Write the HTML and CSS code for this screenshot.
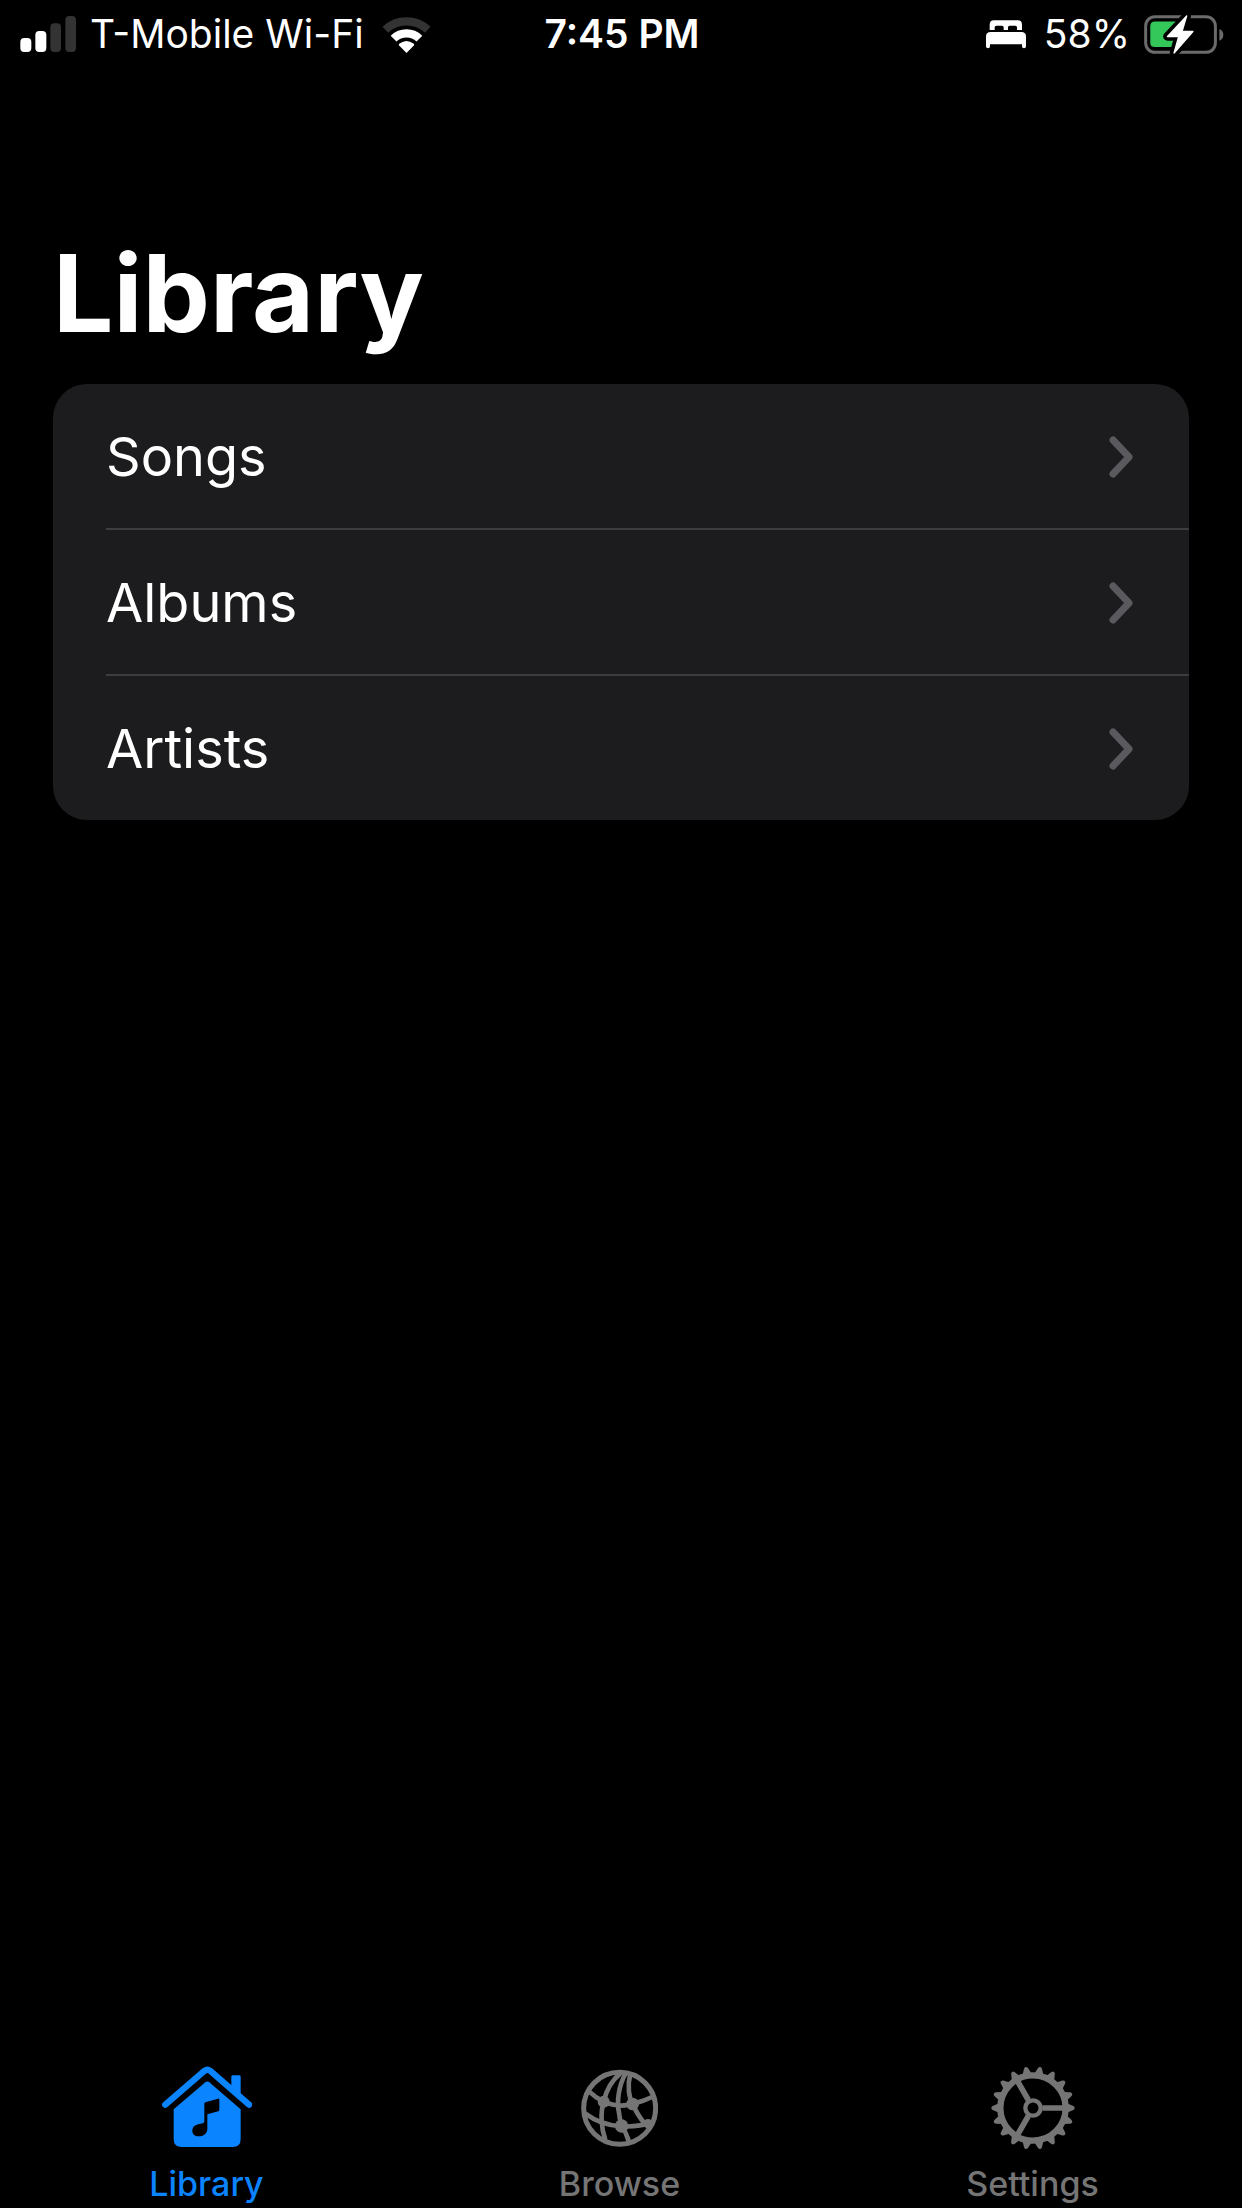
FILE: index.html
```html
<!DOCTYPE html>
<html lang="en">
<head>
  <meta charset="UTF-8">
  <title>Library</title>
  <meta name="viewport" content="width=device-width, initial-scale=1.0">
  <link rel="stylesheet" href="styles.css">
</head>
<body>
  <header class="status-bar">
    <div class="status-left">
      <svg class="icon-signal" viewBox="0 0 168 108" aria-hidden="true">
        <rect x="1" y="66" width="33" height="42" rx="12" fill="#fff"/>
        <rect x="46" y="45" width="33" height="63" rx="12" fill="#fff"/>
        <rect x="91" y="22" width="32" height="86" rx="12" fill="#333"/>
        <rect x="136" y="0" width="32" height="108" rx="12" fill="#333"/>
      </svg>
      <span class="carrier">T-Mobile Wi-Fi</span>
      <svg class="icon-wifi" viewBox="0 0 148 111" aria-hidden="true">
        <path d="M10 41A94 94 0 0 1 138 41" fill="none" stroke="#333" stroke-width="25"/>
        <path d="M35 68A56 56 0 0 1 113 68" fill="none" stroke="#fff" stroke-width="25"/>
        <path d="M74 111L51 88Q50 85 53 83Q74 67 95 83Q98 85 97 88Z" fill="#fff"/>
      </svg>
    </div>
    <time class="clock">7:45 PM</time>
    <div class="status-right">
      <svg class="icon-bed" viewBox="0 0 120 87" fill="#fff" aria-hidden="true">
        <path d="M11 30V14Q11 1 24 1H95Q108 1 108 14V30H93V22Q93 17 88 17H71Q66 17 66 22V30H53V22Q53 17 48 17H31Q26 17 26 22V30Z"/>
        <path d="M0 50Q0 36 14 36H106Q120 36 120 50V79Q120 85 114 85Q108 85 108 79V73H12V79Q12 85 6 85Q0 85 0 79Z"/>
      </svg>
      <span>58%</span>
      <svg class="icon-battery" viewBox="0 0 240 118" aria-hidden="true">
        <rect x="4" y="5" width="211" height="108" rx="28" fill="none" stroke="#6b6b6b" stroke-width="9"/>
        <path d="M227 42Q239 47 239 60Q239 73 227 78Z" fill="#6b6b6b"/>
        <path d="M32 20H96V97H32Q18 97 18 83V34Q18 20 32 20Z" fill="#34c759"/>
        <path class="bolt" d="M128 3L70 65H104L90 115L147 50H114Z"/>
        <path d="M128 3L70 65H104L90 115L147 50H114Z" fill="#fff" stroke="#fff" stroke-width="4" stroke-linejoin="round"/>
      </svg>
    </div>
  </header>

  <main>
    <h1>Library</h1>
    <ul class="list">
      <li>
        <a href="#">Songs
          <svg class="chevron" viewBox="0 0 24 42" aria-hidden="true"><path d="M4 4L20 21L4 38"/></svg>
        </a>
      </li>
      <li>
        <a href="#">Albums
          <svg class="chevron" viewBox="0 0 24 42" aria-hidden="true"><path d="M4 4L20 21L4 38"/></svg>
        </a>
      </li>
      <li>
        <a href="#">Artists
          <svg class="chevron" viewBox="0 0 24 42" aria-hidden="true"><path d="M4 4L20 21L4 38"/></svg>
        </a>
      </li>
    </ul>
  </main>

  <nav class="tab-bar">
    <a class="tab active" href="#">
      <svg viewBox="0 0 270 252" aria-hidden="true">
        <path d="M10 116L128 14Q136 8 144 14L261 116" fill="none" stroke="currentColor" stroke-width="19" stroke-linecap="round" stroke-linejoin="round"/>
        <path d="M208 75V32Q208 28 212 28H232Q236 28 236 32V90Z" fill="currentColor"/>
        <path d="M130 49Q136 44 142 49L236 130V219Q236 243 212 243H59Q35 243 35 219V130Z" fill="currentColor"/>
        <path d="M127 113Q127 110 130 109L168 98Q172 97 172 101V132Q172 135 169 136L136 145V188C136 203 124 211 110 211C98 211 91 204 91 194C91 181 101 176 113 174L122 172Q127 171 127 166Z" fill="#000"/>
      </svg>
      <span>Library</span>
    </a>
    <a class="tab" href="#">
      <svg viewBox="0 -10 232 252" fill="none" stroke="currentColor" stroke-width="14" aria-hidden="true">
        <circle cx="116" cy="117" r="108" stroke-width="15"/>
        <path d="M118 12C90 35 75 65 68 97C58 130 60 175 73 212"/>
        <path d="M134 12C112 50 107 100 114 130Q116 150 122 170Q136 190 144 218"/>
        <path d="M148 14C138 50 144 85 155 104Q168 135 192 164"/>
        <path d="M24 66Q45 86 68 97Q110 116 155 104Q190 95 220 80"/>
        <path d="M12 132Q60 168 122 171Q170 174 214 159"/>
        <g fill="currentColor" stroke="none">
          <circle cx="68" cy="97" r="18"/>
          <circle cx="155" cy="104" r="19"/>
          <circle cx="122" cy="170" r="20"/>
          <circle cx="201" cy="163" r="14"/>
        </g>
      </svg>
      <span>Browse</span>
    </a>
    <a class="tab" href="#">
      <svg class="gear" viewBox="-126 -126 252 252" fill="none" stroke="currentColor" aria-hidden="true">
        <circle r="98" stroke-width="19"/>
        <circle r="23" stroke-width="13"/>
        <path d="M28 0H92M-14 24L-46 80M-14 -24L-46 -80" stroke-width="17"/>
        <g id="teeth" fill="currentColor" stroke="none"></g>
      </svg>
      <span>Settings</span>
    </a>
  </nav>

  <script>
    // 18 teeth around the gear, one every 20 degrees
    const teeth = document.getElementById('teeth');
    for (let i = 0; i < 18; i++) {
      const tooth = document.createElementNS('http://www.w3.org/2000/svg', 'path');
      tooth.setAttribute('d', 'M102 -14L121 -6Q125 -4 125 0Q125 4 121 6L102 14Z');
      tooth.setAttribute('transform', `rotate(${i * 20})`);
      teeth.appendChild(tooth);
    }
  </script>
</body>
</html>
```
FILE: styles.css
```css
* { box-sizing: border-box; }

body {
  margin: 0;
  min-height: 100vh;
  display: flex;
  flex-direction: column;
  font-family: Inter, 'Liberation Sans', sans-serif;
  background: #000;
  color: #fff;
}
a { text-decoration: none; }
svg { display: block; flex-shrink: 0; }

/* Status bar */
.status-bar {
  display: flex;
  align-items: center;
  height: 68px;
  padding: 0 18px 0 20px;
  font-size: 39px;
  line-height: 48px;
  white-space: nowrap;
}
.status-left,
.status-right {
  flex: 1 1 0;
  display: flex;
  align-items: center;
}
.status-left { gap: 14px; }
.status-right { justify-content: flex-end; gap: 14px; }
.clock { font-weight: 600; }
.icon-signal { width: 56px; height: 36px; }
.icon-wifi { width: 49px; height: 37px; margin-left: 4px; }
.icon-bed { width: 40px; height: 29px; margin-right: 4px; }
.icon-battery { width: 80px; height: 39px; }
.bolt {
  fill: #000;
  stroke: #000;
  stroke-width: 26;
  stroke-linejoin: round;
}

/* Library list */
main {
  flex: 1;
  padding: 163px 53px 0;
}
h1 {
  margin: 0 0 29px;
  font-size: 107px;
  line-height: 124px;
  font-weight: 700;
}
.list {
  list-style: none;
  margin: 0;
  padding: 0 0 0 53px;
  background: #1c1c1e;
  border-radius: 34px;
}
.list li + li { border-top: 2px solid #3d3d40; }
.list a {
  display: flex;
  align-items: center;
  justify-content: space-between;
  height: 144px;
  padding: 2px 56px 0 0;
  color: #fff;
  font-size: 54px;
  line-height: 72px;
}
.chevron {
  width: 24px;
  height: 42px;
  fill: none;
  stroke: #5a5a5e;
  stroke-width: 7;
  stroke-linecap: round;
  stroke-linejoin: round;
}

/* Tab bar */
.tab-bar {
  display: flex;
  padding: 0 3px 6px 0;
}
.tab {
  flex: 1 1 0;
  display: flex;
  flex-direction: column;
  align-items: center;
  gap: 16px;
  color: #757575;
  font-size: 34px;
  line-height: 36px;
  font-weight: 500;
}
.tab.active { color: #0a84ff; }
.tab svg { height: 84px; }
```
